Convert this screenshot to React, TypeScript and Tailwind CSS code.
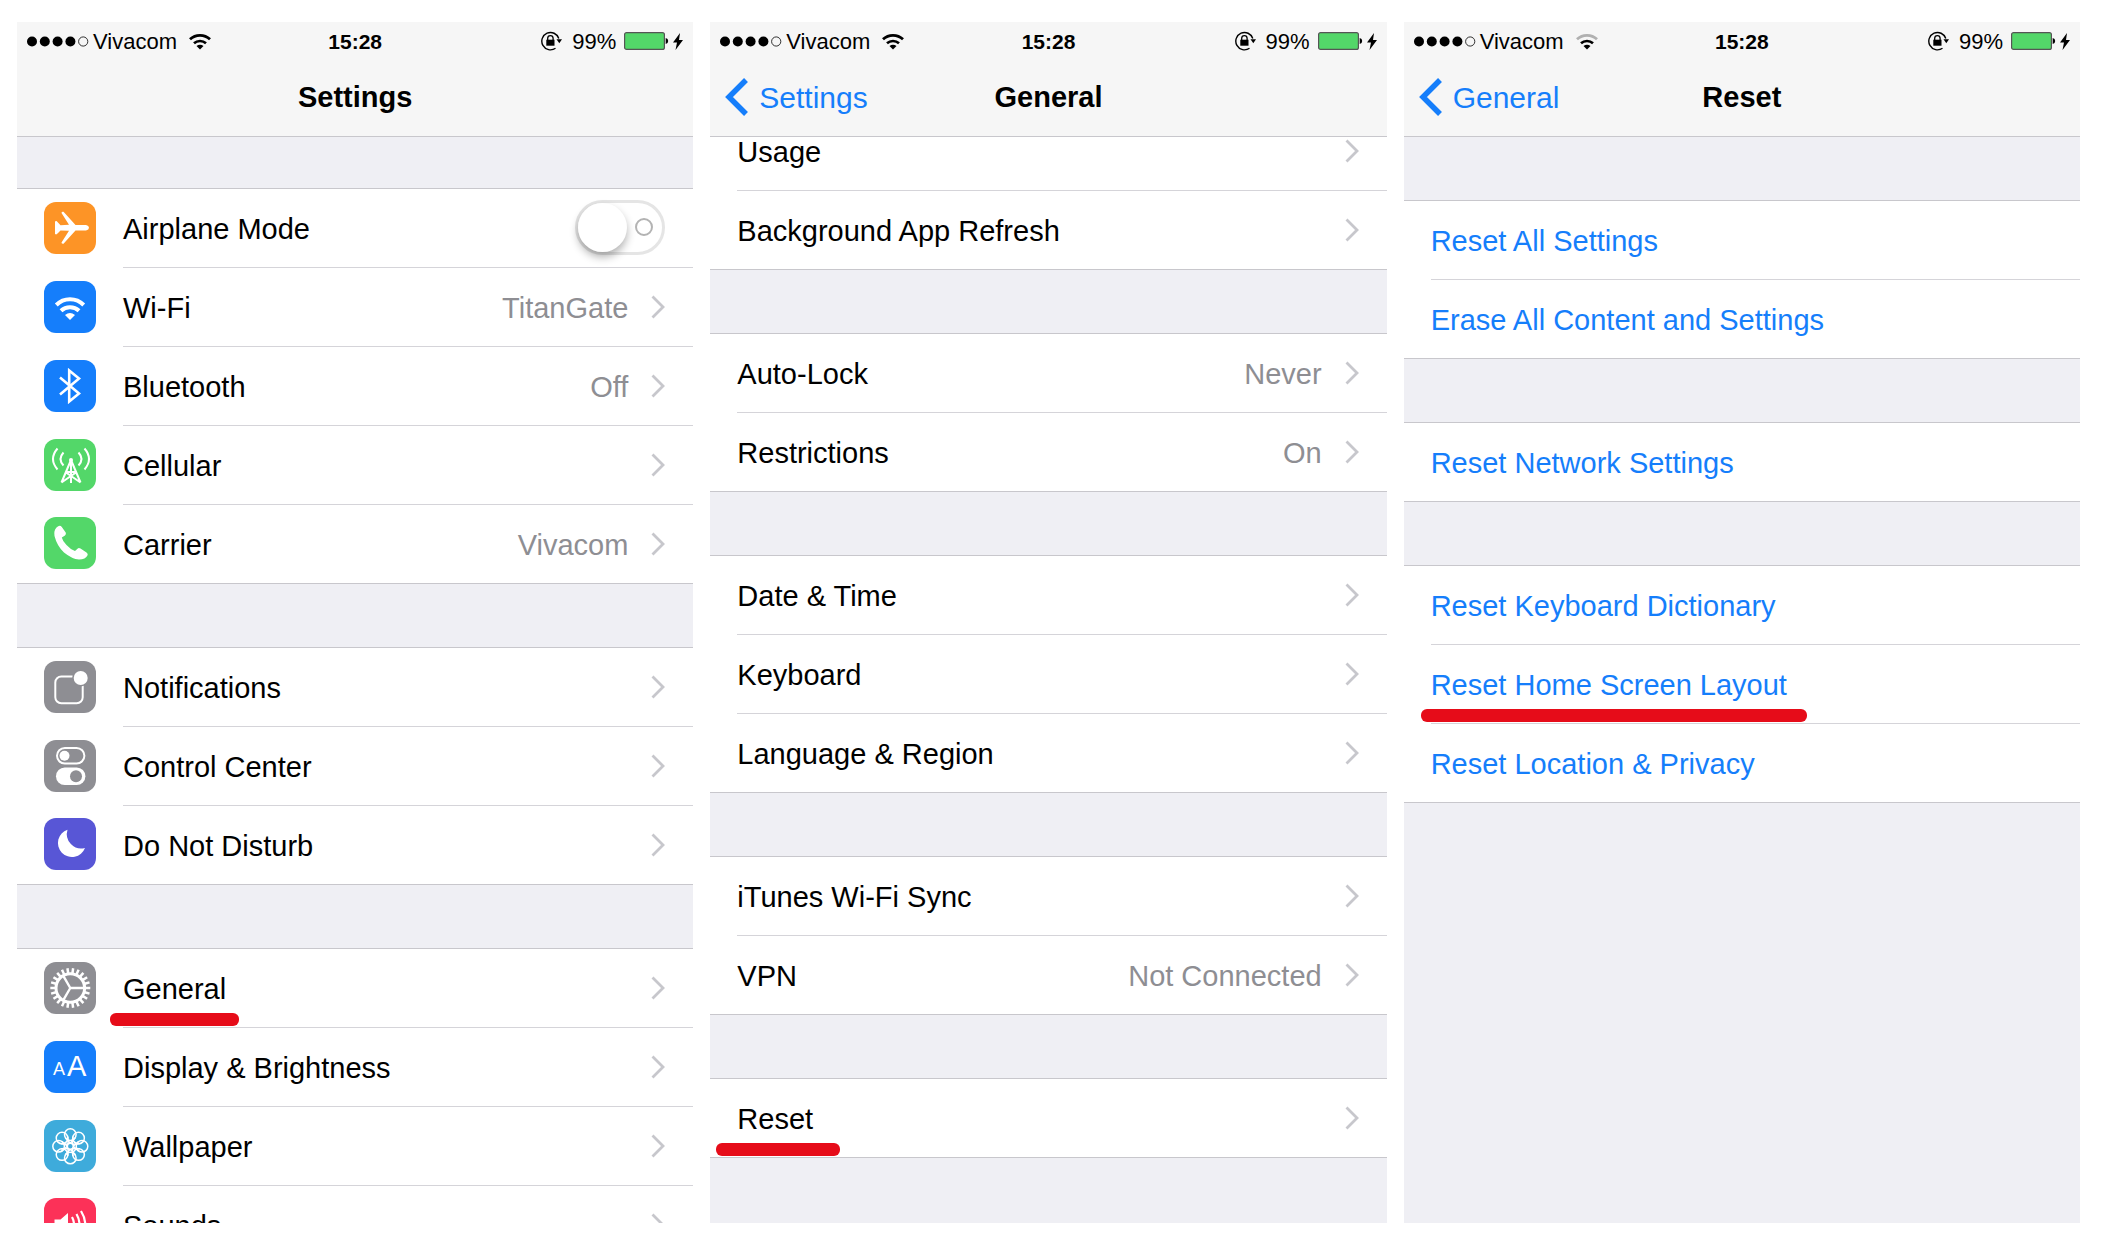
import { useState, type ReactNode } from 'react';

type Row = {
  label: string;
  value?: string;
  icon?: ReactNode;
  mark?: string;
  action?: boolean;
  toggle?: boolean;
};

function Tile({ color, children }: { color: string; children: ReactNode }) {
  return (
    <svg viewBox="0 0 52 52" className={`mb-0.5 size-[52px] shrink-0 rounded-xl ${color}`} fill="none" aria-hidden="true">
      {children}
    </svg>
  );
}

const GEAR_TEETH = Array.from({ length: 22 }, (_, i) => (i * 360) / 22);
const PETALS = Array.from({ length: 8 }, (_, i) => i * 45);

const airplane = (
  <Tile color="bg-[#fd9426]">
    <path
      fill="#fff"
      d="M11 19.500Q12.500 18.500 13.500 20L16.500 23.200 25 22.800 17.500 11Q17.500 9.500 19.500 9.800L31.500 23H42Q45 23.800 45 25.800T42 28.600H31.500L19.500 41.800Q17.500 42 17.500 40.500L25 28.800 16.500 28.400 13.500 31.600Q12.500 33 11 32z"
    />
  </Tile>
);

const wifi = (
  <Tile color="bg-[#157efb]">
    <path d="M12.300 24A19 19 0 0 1 39.700 24M17 29.800a13 13 0 0 1 18 0" stroke="#fff" strokeWidth="4" />
    <path d="M21 34q5-4 10 0l-5 5z" fill="#fff" />
  </Tile>
);

const bluetooth = (
  <Tile color="bg-[#157efb]">
    <path d="M16 17.500 35 33.500 25.200 41.500V10.500L35 18.500 16 34.500" stroke="#fff" strokeWidth="2.600" />
  </Tile>
);

const cellular = (
  <Tile color="bg-[#53d769]">
    <g stroke="#fff" strokeWidth="2">
      <path d="M13.500 9.500Q4.500 20 13.500 30.500M19.500 13.500q-6 6.500 0 13M40.500 9.500q9 10.500 0 21M34.500 13.500q6 6.500 0 13" />
      <path d="M27 21 17.500 43.500M27 21l9.500 22.500M27 21v23M22.500 33h9M17.500 43.500 32 33.500M36.500 43.500 22 33.500" />
    </g>
    <circle cx="27" cy="21" r="2" fill="#fff" />
  </Tile>
);

const phone = (
  <Tile color="bg-[#53d769]">
    <path
      fill="#fff"
      d="M12.500 10.500Q9.500 13.500 10.500 19 13 29 20 35.500 28 42 35 42.500q6.500 0 8.700-4.500.3-1.500-1.200-2.500L36.500 31.500q-1.800-1-3 .2L31 34q-5-2-8.500-6-4-4-4.700-7.500l3.200-2q1.500-1.300.7-3L17.800 10q-2-2.500-5.300.5z"
    />
  </Tile>
);

const notifications = (
  <Tile color="bg-[#8e8e93]">
    <rect x="11.300" y="15.500" width="27.400" height="26.800" rx="6" stroke="#fff" strokeWidth="2" />
    <circle cx="36.700" cy="17" r="8.500" fill="#8e8e93" />
    <circle cx="36.700" cy="17" r="7" fill="#fff" />
  </Tile>
);

const controlCenter = (
  <Tile color="bg-[#8e8e93]">
    <rect x="13" y="8" width="27.400" height="15.600" rx="7.800" stroke="#fff" strokeWidth="2" />
    <circle cx="20.500" cy="15.800" r="5" fill="#fff" />
    <rect x="12" y="27.500" width="29.400" height="17.500" rx="8.700" fill="#fff" />
    <circle cx="32" cy="36.200" r="6" fill="#8e8e93" />
  </Tile>
);

const doNotDisturb = (
  <Tile color="bg-[#5856d6]">
    <path d="M23.500 11.700A14 14 0 1 0 41 30 14.500 14.500 0 0 1 23.500 11.700z" fill="#fff" />
  </Tile>
);

const general = (
  <Tile color="bg-[#8e8e93]">
    <g stroke="#fff" transform="translate(26.300 26)">
      <circle r="14.300" strokeWidth="3" />
      {GEAR_TEETH.map((deg) => (
        <path key={deg} d="M15 0h5" strokeWidth="2.500" transform={`rotate(${deg})`} />
      ))}
      <path d="M0 0h14M0 0-7-12.100M0 0-7 12.100" strokeWidth="2.400" />
    </g>
  </Tile>
);

const display = (
  <Tile color="bg-[#157efb]">
    <text x="9" y="34" fontSize="18" fill="#fff">A</text>
    <text x="23" y="35" fontSize="29" fill="#fff">A</text>
  </Tile>
);

const wallpaper = (
  <Tile color="bg-[#3eabdb]">
    <g stroke="#fff" strokeWidth="1.500" transform="translate(26.300 26.300)">
      {PETALS.map((deg) => (
        <g key={deg} transform={`rotate(${deg})`}>
          <circle cx="11.700" r="5.800" />
          <path d="M3 0 8.500 5M3 0 8.500-5" />
        </g>
      ))}
      <circle r="3" />
    </g>
  </Tile>
);

const sounds = (
  <Tile color="bg-[#fc3158]">
    <path d="M10.500 21.500h6L24 15v23l-7.500-6.500h-6z" fill="#fff" />
    <path d="M28 19q4 7.500 0 15M32.500 16q6 10.500 0 21M37 13q8.500 13.500 0 27" stroke="#fff" strokeWidth="2.200" />
  </Tile>
);

function Chevron() {
  return (
    <svg viewBox="0 0 14 24" className="h-6 w-3.5 shrink-0" fill="none" aria-hidden="true">
      <path d="M1.500 1.500 12 12 1.500 22.500" stroke="#c7c7cc" strokeWidth="2.800" />
    </svg>
  );
}

function Toggle({ label }: { label: string }) {
  const [on, setOn] = useState(false);
  return (
    <span className={`relative mb-0.5 flex h-[55px] w-[90px] shrink-0 items-center rounded-full border-[3px] ${on ? 'border-[#53d769] bg-[#53d769]' : 'border-[#e5e5e5] bg-white'}`}>
      <input
        type="checkbox"
        role="switch"
        aria-label={label}
        checked={on}
        onChange={(e) => setOn(e.target.checked)}
        className="absolute inset-0 z-10 cursor-pointer appearance-none rounded-full"
      />
      <span className={`size-[49px] rounded-full bg-white shadow-[0_5px_8px_rgba(0,0,0,0.3)] ${on ? 'ml-auto' : ''}`} />
      {!on && <span className="ml-2 size-[18px] rounded-full border-2 border-[#b3b3b3]" />}
    </span>
  );
}

function StatusBar({ weakSignal }: { weakSignal?: boolean }) {
  return (
    <div className="grid h-9 grid-cols-[1fr_auto_1fr] items-center px-2.5 text-[22px] leading-9">
      <div className="flex items-center">
        <svg viewBox="0 0 62 11" className="h-[11px] w-[62px]" fill="#000" aria-hidden="true">
          <circle cx="5" cy="5.500" r="5" />
          <circle cx="17.800" cy="5.500" r="5" />
          <circle cx="30.600" cy="5.500" r="5" />
          <circle cx="43.400" cy="5.500" r="5" />
          <circle cx="56.200" cy="5.500" r="4.600" fill="none" stroke="#000" strokeWidth=".8" />
        </svg>
        <span className="ml-1 pt-0.5">Vivacom</span>
        <svg viewBox="0 0 22 17" className="ml-3 h-[17px] w-[22px]" fill="none" aria-hidden="true">
          <path d="M1 6.300a14.500 14.500 0 0 1 20 0" stroke={weakSignal ? '#b0b0b0' : '#000'} strokeWidth="2.800" />
          <path d="M5 10.300a8.800 8.800 0 0 1 12 0" stroke="#000" strokeWidth="2.600" />
          <path d="M7.500 13q3.500-2.700 7 0L11 16.500z" fill="#000" />
        </svg>
      </div>
      <span className="pt-0.5 text-[21px] font-bold">15:28</span>
      <div className="flex items-center justify-end">
        <svg viewBox="0 0 21 20" className="h-5 w-[21px]" fill="none" stroke="#000" aria-hidden="true">
          <path d="M17.800 7.500A8.700 8.700 0 1 0 14.500 17.300" strokeWidth="1.400" />
          <path d="M15.500 8.300h5.500l-2.700 4z" fill="#000" stroke="none" />
          <path d="M6.700 9V7.300a2.700 2.700 0 0 1 5.400 0V9" strokeWidth="1.300" />
          <rect x="5.300" y="8.700" width="8.200" height="6" fill="#000" stroke="none" />
        </svg>
        <span className="ml-2.5 pt-0.5">99%</span>
        <svg viewBox="0 0 45 18" className="ml-2 h-[18px] w-[45px]" aria-hidden="true">
          <rect x=".6" y=".6" width="39.800" height="16.800" rx="2" fill="#53d769" stroke="#555" strokeWidth="1.200" />
          <path d="M41.700 6q2.500.5 2.500 3t-2.500 3z" fill="#000" />
        </svg>
        <svg viewBox="0 0 10 17" className="ml-1 h-[17px] w-2.5" fill="#000" aria-hidden="true">
          <path d="M7 0 0 9.500h4L2.500 17 10 7H6z" />
        </svg>
      </div>
    </div>
  );
}

function Screen({ title, back, weakSignal, children }: { title: string; back?: string; weakSignal?: boolean; children: ReactNode }) {
  return (
    <section className="flex min-w-0 flex-1 flex-col overflow-hidden bg-[#efeff4]">
      <header className="h-[115px] shrink-0 border-b border-[#c8c7cc] bg-[#f6f6f6]">
        <StatusBar weakSignal={weakSignal} />
        <nav className="grid h-[78px] grid-cols-[1fr_auto_1fr] items-center px-[15px]">
          <div>
            {back && (
              <a href="#" className="flex items-center gap-2.5 text-[30px] text-[#157efb]">
                <svg viewBox="0 0 24 38" className="h-[38px] w-6" fill="none" aria-hidden="true">
                  <path d="M21 2 4 19 21 36" stroke="currentColor" strokeWidth="5.500" />
                </svg>
                {back}
              </a>
            )}
          </div>
          <h1 className="pt-0.5 text-[29px] font-bold">{title}</h1>
        </nav>
      </header>
      <div className="flex min-h-0 flex-1 flex-col overflow-hidden">{children}</div>
    </section>
  );
}

function Group({ rows, className = 'mt-[63px]' }: { rows: Row[]; className?: string }) {
  return (
    <ul className={`shrink-0 border-y border-[#c8c7cc] bg-white text-[29px] ${className}`}>
      {rows.map((row, i) => {
        const last = i === rows.length - 1;
        const content = (
          <>
            {row.icon}
            <span className={`relative flex h-full flex-1 items-center pr-7 ${last ? '' : 'border-b border-[#d5d4d9]'}`}>
              <span className="flex-1 pt-1">{row.label}</span>
              {row.value && <span className="pt-1 pr-[23px] text-[#8e8e93]">{row.value}</span>}
              {row.toggle && <Toggle label={row.label} />}
              {!row.toggle && !row.action && <Chevron />}
              {row.mark && <span className={`absolute top-16 h-[13px] rounded-md bg-[#e60c19] ${row.mark}`} />}
            </span>
          </>
        );
        const box = 'flex h-full w-full items-center gap-[27px] pl-[27px] text-left';
        return (
          <li key={row.label} className={last ? 'h-[78px]' : 'h-[79px]'}>
            {row.action ? (
              <button type="button" className={`${box} text-[#157efb]`}>{content}</button>
            ) : row.toggle ? (
              <div className={box}>{content}</div>
            ) : (
              <a href="#" className={box}>{content}</a>
            )}
          </li>
        );
      })}
    </ul>
  );
}

export default function App() {
  return (
    <main className="flex h-screen gap-[17px] overflow-hidden bg-white pt-[22px] pr-[26px] pb-[33px] pl-[17px] font-['Liberation_Sans',Arial,sans-serif] text-black">
      <Screen title="Settings">
        <Group
          className="mt-[51px]"
          rows={[
            { label: 'Airplane Mode', icon: airplane, toggle: true },
            { label: 'Wi-Fi', value: 'TitanGate', icon: wifi },
            { label: 'Bluetooth', value: 'Off', icon: bluetooth },
            { label: 'Cellular', icon: cellular },
            { label: 'Carrier', value: 'Vivacom', icon: phone },
          ]}
        />
        <Group
          rows={[
            { label: 'Notifications', icon: notifications },
            { label: 'Control Center', icon: controlCenter },
            { label: 'Do Not Disturb', icon: doNotDisturb },
          ]}
        />
        <Group
          rows={[
            { label: 'General', icon: general, mark: '-left-[13px] w-[129px]' },
            { label: 'Display & Brightness', icon: display },
            { label: 'Wallpaper', icon: wallpaper },
            { label: 'Sounds', icon: sounds },
          ]}
        />
      </Screen>

      <Screen title="General" back="Settings">
        {/* list is scrolled, first row sits partly under the header */}
        <Group className="-mt-[26px]" rows={[{ label: 'Usage' }, { label: 'Background App Refresh' }]} />
        <Group
          rows={[
            { label: 'Auto-Lock', value: 'Never' },
            { label: 'Restrictions', value: 'On' },
          ]}
        />
        <Group rows={[{ label: 'Date & Time' }, { label: 'Keyboard' }, { label: 'Language & Region' }]} />
        <Group rows={[{ label: 'iTunes Wi-Fi Sync' }, { label: 'VPN', value: 'Not Connected' }]} />
        <Group rows={[{ label: 'Reset', mark: '-left-[21px] w-[124px]' }]} />
      </Screen>

      <Screen title="Reset" back="General" weakSignal>
        <Group
          rows={[
            { label: 'Reset All Settings', action: true },
            { label: 'Erase All Content and Settings', action: true },
          ]}
        />
        <Group rows={[{ label: 'Reset Network Settings', action: true }]} />
        <Group
          rows={[
            { label: 'Reset Keyboard Dictionary', action: true },
            { label: 'Reset Home Screen Layout', action: true, mark: '-left-[10px] w-[386px]' },
            { label: 'Reset Location & Privacy', action: true },
          ]}
        />
      </Screen>
    </main>
  );
}
